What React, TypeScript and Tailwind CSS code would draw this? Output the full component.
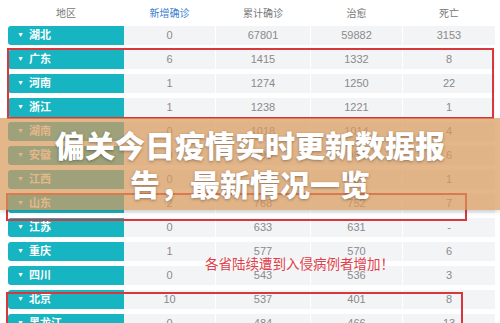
import React from "react";

const rows = [
  ["湖北", "0", "67801", "59882", "3153"],
  ["广东", "6", "1415", "1332", "8"],
  ["河南", "1", "1274", "1250", "22"],
  ["浙江", "1", "1238", "1221", "1"],
  ["湖南", "0", "1018", "1014", "4"],
  ["安徽", "0", "990", "984", "6"],
  ["江西", "0", "935", "934", "1"],
  ["山东", "2", "768", "752", "7"],
  ["江苏", "0", "633", "631", "-"],
  ["重庆", "1", "577", "570", "6"],
  ["四川", "0", "543", "536", "3"],
  ["北京", "10", "537", "401", "8"],
  ["黑龙江", "0", "484", "466", "13"],
];

const widths = ["w-[91px]", "w-[94px]", "w-[91px]", "w-[92px]"];
const font = { fontFamily: '"Liberation Sans", "Noto Sans CJK SC", sans-serif' };

export default function App() {
  return (
    <div className="relative w-[500px] h-[323px] overflow-hidden bg-white" style={font}>
      {/* header */}
      <div className="flex h-[26px] items-center pl-[8px] text-[10px] text-[#777]">
        <div className="w-[116px] text-center">地区</div>
        <div className={`${widths[0]} text-center text-[#3b7fd1]`}>新增确诊</div>
        <div className={`${widths[1]} ml-px text-center`}>累计确诊</div>
        <div className={`${widths[2]} ml-px text-center`}>治愈</div>
        <div className={`${widths[3]} ml-px text-center`}>死亡</div>
      </div>

      {/* rows */}
      <div className="flex flex-col gap-[5px] pl-[8px]">
        {rows.map((r) => (
          <div key={r[0]} className="flex h-[19px] text-[11px]">
            <div className="flex w-[116px] items-center gap-[5px] rounded-l-[3px] bg-[#17b4c1] pl-[9px] font-bold text-white">
              <span className="text-[7px]">▼</span>
              <span>{r[0]}</span>
            </div>
            {r.slice(1).map((v, i) => (
              <div
                key={i}
                className={`${widths[i]} ${i > 0 ? "ml-px" : ""} flex items-center justify-center bg-[#f3f4f6] text-[#8a8a8a]`}
              >
                {v}
              </div>
            ))}
          </div>
        ))}
      </div>

      {/* red highlight boxes */}
      <div className="absolute left-[7px] top-[48px] h-[71px] w-[487px] border-2 border-[#d6383d]" />
      <div className="absolute left-[6px] top-[193px] h-[28px] w-[461px] border-2 border-[#d6383d]" />
      <div className="absolute left-[6px] top-[292px] h-[40px] w-[457px] border-2 border-[#d6383d]" />

      {/* annotation */}
      <div className="absolute left-[205px] top-[255px] text-[13.5px] leading-[16px] text-[#e0404a]" style={{ fontFamily: '"Noto Sans CJK SC", sans-serif' }}>
        各省陆续遭到入侵病例者增加！
      </div>

      {/* title band */}
      <div className="absolute left-0 top-[118px] flex h-[92px] w-[500px] flex-col items-center justify-center bg-[#d8995a]/70 shadow-[0_2px_4px_rgba(0,0,0,0.15)]">
        <div
          className="text-center text-[30px] font-black leading-[39px] text-white [text-shadow:0_1px_3px_rgba(0,0,0,0.35)]"
          style={{ fontFamily: '"Noto Sans CJK SC", sans-serif' }}
        >
          偏关今日疫情实时更新数据报
          <br />
          告，最新情况一览
        </div>
      </div>
    </div>
  );
}
